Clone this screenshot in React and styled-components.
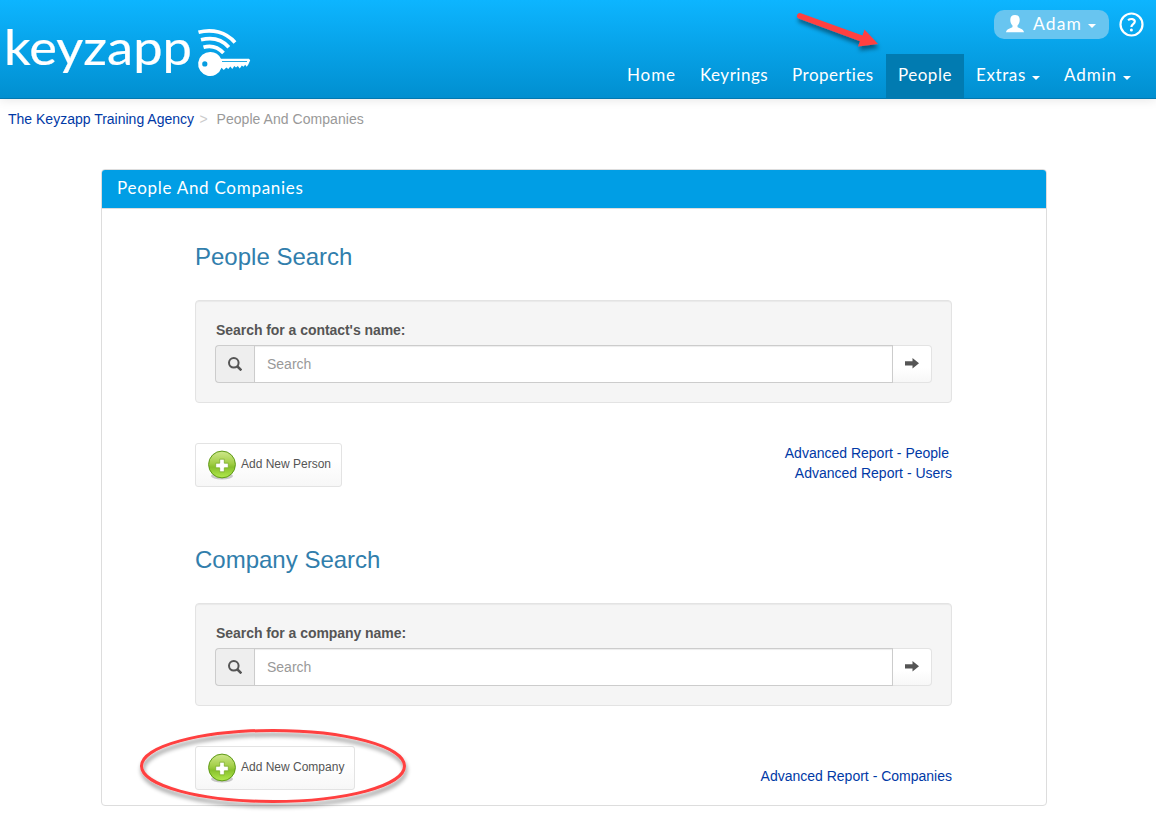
import React from "react";
import styled, { createGlobalStyle } from "styled-components";

const GlobalStyle = createGlobalStyle`
    * {
        box-sizing: border-box;
    }

    body {
        margin: 0;
        background-color: #fff;
        color: #555;
        font-family: "Liberation Sans", Arial, sans-serif;
        font-size: 14px;
        line-height: 20px;
    }

    a {
        color: #0039a6;
        text-decoration: none;
    }
`;

const Page = styled.div`
    position: relative;
    height: 833px;
    overflow: hidden;
`;

const Header = styled.header`
    height: 99px;
    display: flex;
    justify-content: space-between;
    border-bottom: 1px solid #0278b0;
    background: linear-gradient(#0db5ff, #018fd0);
    box-shadow: 0 1px 10px rgba(0, 0, 0, 0.1);
    color: #fff;
    font-family: Lato, sans-serif;
`;

const Logo = styled.svg`
    width: 256px;
    height: 98px;
    display: block;
`;

const HeaderRight = styled.div`
    display: flex;
    flex-direction: column;
    justify-content: space-between;
    padding: 10px 12px 0 0;
`;

const UserBar = styled.div`
    display: flex;
    justify-content: flex-end;
    align-items: center;
    gap: 10px;
`;

const UserButton = styled.button`
    width: 115px;
    height: 29px;
    display: flex;
    align-items: center;
    padding: 0 0 2px 12px;
    border: 0;
    border-radius: 10px;
    background-color: #68c5f0;
    color: #fff;
    font-family: Lato, sans-serif;
    font-size: 17.5px;
    letter-spacing: 1.1px;
`;

const UserName = styled.span`
    margin-left: 9px;
`;

const Nav = styled.nav`
    display: flex;
`;

const NavItem = styled.a`
    width: ${(props) => props.$width}px;
    height: 44px;
    display: flex;
    align-items: center;
    padding: 0 0 2px 12px;
    background-color: ${(props) => (props.$active ? "#017bb1" : "transparent")};
    color: #fff;
    font-size: 17px;
    letter-spacing: ${(props) => props.$spacing}px;
    white-space: nowrap;
`;

const Caret = styled.span`
    margin: 5px 0 0 6px;
    border-top: 4px solid #fff;
    border-left: 4px solid transparent;
    border-right: 4px solid transparent;
`;

const Breadcrumb = styled.div`
    height: 70px;
    display: flex;
    padding: 10px 8px;
    color: #999;
`;

const Divider = styled.span`
    width: 22.500px;
    padding-left: 5.500px;
    color: #ccc;
`;

const Current = styled.span`
    letter-spacing: 0.05px;
`;

const Panel = styled.section`
    width: 946px;
    height: 637px;
    margin-left: 101px;
    border: 1px solid #ddd;
    border-radius: 4px;
`;

const PanelHeading = styled.div`
    height: 39px;
    padding: 8px 15px;
    border-bottom: 1px solid #ddd;
    border-radius: 3px 3px 0 0;
    background-color: #009ee5;
    color: #fff;
    font-family: Lato, sans-serif;
    font-size: 17px;
    letter-spacing: 0.72px;
`;

const PanelBody = styled.div`
    padding: 35px 94px 0 93px;
`;

const Block = styled.div`
    height: 303px;
`;

const Title = styled.h2`
    height: 56px;
    margin: 0;
    color: #317eac;
    font-size: 24px;
    font-weight: 400;
    line-height: 26px;
`;

const Well = styled.div`
    height: 103px;
    padding: 19px;
    border: 1px solid #e3e3e3;
    border-radius: 4px;
    background-color: #f5f5f5;
    box-shadow: inset 0 1px 1px rgba(0, 0, 0, 0.05);
`;

const Label = styled.label`
    display: block;
    height: 25px;
    padding-left: 1px;
    font-weight: 700;
    letter-spacing: -0.05px;
`;

const InputGroup = styled.div`
    height: 38px;
    display: flex;
`;

const Addon = styled.span`
    width: 39px;
    display: flex;
    align-items: center;
    justify-content: center;
    border: 1px solid #ccc;
    border-right: 0;
    border-radius: 4px 0 0 4px;
    background-color: #eee;
`;

const Input = styled.input`
    flex: 1;
    min-width: 0;
    padding: 0 12px;
    border: 1px solid #ccc;
    background-color: #fff;
    box-shadow: inset 0 1px 1px rgba(0, 0, 0, 0.075);
    font-family: inherit;
    font-size: 14px;

    &::placeholder {
        color: #999;
        opacity: 1;
    }
`;

const GoButton = styled.button`
    width: 39px;
    display: flex;
    align-items: center;
    justify-content: center;
    padding: 0 1px 2px 0;
    border: 1px solid #e3e3e3;
    border-left: 0;
    border-radius: 0 4px 4px 0;
    background: linear-gradient(#fff 60%, #f7f7f7);
`;

const Actions = styled.div`
    height: 44px;
    display: flex;
    justify-content: space-between;
    align-items: flex-start;
    margin-top: 40px;
`;

const AddButton = styled.button`
    width: ${(props) => props.$width}px;
    height: 44px;
    display: flex;
    align-items: center;
    gap: 4px;
    padding: 0 0 0 10px;
    border: 1px solid #e3e3e3;
    border-radius: 3px;
    background: linear-gradient(#fff 40%, #f7f7f7);
    color: #555;
    font-family: inherit;
    font-size: 12px;
    white-space: nowrap;
`;

const AddLabel = styled.span`
    padding-bottom: 2px;
`;

const Reports = styled.div`
    padding-top: ${(props) => props.$top || 0}px;
    text-align: right;
`;

const Report = styled.a`
    display: block;
    padding-right: ${(props) => props.$inset || 0}px;
`;

const Annotations = styled.svg`
    position: absolute;
    left: 0;
    top: 0;
    width: 1156px;
    height: 833px;
    pointer-events: none;
`;

function BrandLogo() {
    return (
        <Logo viewBox="0 0 256 98" fill="none">
            <text
                x="4"
                y="64.500"
                fill="#fff"
                fontFamily="Lato"
                fontSize="49"
                stroke="#fff"
                strokeWidth="0.200"
                textLength="188"
                lengthAdjust="spacingAndGlyphs"
            >
                keyzapp
            </text>
            <g stroke="#fff" strokeWidth="3.700">
                <path d="M198.500 32.300C212 28.500 226 32 235 42.500" />
                <path d="M201 39.800C212 37 222 39.500 228.800 47.200" />
                <path d="M203.500 47.200C211 45 218 47 223.500 53" />
            </g>
            <path
                fill="#fff"
                fillRule="evenodd"
                d="M210.500 52a12 12 0 0 1 10.500 6.800H249l1.200 1.500-2 4.500-1.500 2-1.500-2-1.700 2-1.700-1.200-2 3-2-2.500-1.800 1.500-1.700-1.500-2 3-2-2.500-2 2.500-2-1.500-2.500 2.500-2.300-2.300A12 12 0 1 1 210.500 52zM204.800 61.300a2.600 2.600 0 1 0 0 5.200 2.600 2.600 0 0 0 0-5.200z"
            />
            <path stroke="#0aa0df" strokeWidth="0.900" d="M222 61.500h25" />
        </Logo>
    );
}

function PersonIcon() {
    return (
        <svg width="18" height="18" viewBox="0 0 18 18" fill="#fff">
            <path d="M9 0c3.400 0 4.800 2 4.700 5 0 2.500-1 4.200-2.200 5.500v1.500c1 1.200 6 1.700 6.500 5.300H0c.5-3.600 5.500-4.100 6.500-5.300v-1.500C5.300 9.200 4.300 7.500 4.300 5 4.200 2 5.600 0 9 0z" />
        </svg>
    );
}

function HelpIcon() {
    return (
        <svg width="25" height="25" viewBox="0 0 25 25" fill="none">
            <circle cx="12.500" cy="12.500" r="11" stroke="#fff" strokeWidth="2.200" />
            <path
                stroke="#fff"
                strokeWidth="2.200"
                d="M9 8.200C11.500 6.400 15.800 6.500 15.800 9.600c0 2.600-3.400 2.500-3.400 5.400"
            />
            <circle cx="12.400" cy="18" r="1.500" fill="#fff" />
        </svg>
    );
}

function SearchIcon() {
    return (
        <svg width="14" height="14" viewBox="0 0 14 14" fill="none" stroke="#555">
            <circle cx="5.800" cy="5.800" r="4.800" strokeWidth="2" />
            <path d="M9 9l4.400 4.400" strokeWidth="2.500" />
        </svg>
    );
}

function ArrowIcon() {
    return (
        <svg width="14" height="11" viewBox="0 0 14 11" fill="#555">
            <path d="M0 3.300h7.500V.1L14 5.300l-6.500 5.200V7.500H0z" />
        </svg>
    );
}

function PlusIcon() {
    return (
        <svg width="31" height="32" viewBox="0 0 31 32">
            <defs>
                <linearGradient id="plusFill" x2="0" y2="1">
                    <stop offset="0" stopColor="#cfe78c" />
                    <stop offset="0.450" stopColor="#a3cf48" />
                    <stop offset="0.600" stopColor="#88c02c" />
                    <stop offset="1" stopColor="#b2ea4e" />
                </linearGradient>
            </defs>
            <ellipse cx="16" cy="27" rx="11" ry="3.500" fill="#000" opacity="0.200" />
            <circle cx="16" cy="15.500" r="13.400" fill="url(#plusFill)" stroke="#5f9a18" />
            <path
                d="M13.700 10.200h4.600v4h4v4.600h-4v4h-4.600v-4h-4v-4.600h4z"
                fill="#fff"
                stroke="#76a823"
                strokeWidth="0.700"
            />
        </svg>
    );
}

function SearchBlock({ title, label, addLabel, addWidth, reportsTop, reports }) {
    return (
        <Block>
            <Title>{title}</Title>
            <Well>
                <Label>{label}</Label>
                <InputGroup>
                    <Addon>
                        <SearchIcon />
                    </Addon>
                    <Input placeholder="Search" />
                    <GoButton>
                        <ArrowIcon />
                    </GoButton>
                </InputGroup>
            </Well>
            <Actions>
                <AddButton $width={addWidth}>
                    <PlusIcon />
                    <AddLabel>{addLabel}</AddLabel>
                </AddButton>
                <Reports $top={reportsTop}>
                    {reports.map((report) => (
                        <Report key={report.name} href="#" $inset={report.inset}>
                            {report.name}
                        </Report>
                    ))}
                </Reports>
            </Actions>
        </Block>
    );
}

const navItems = [
    { name: "Home", width: 73, spacing: 0.9 },
    { name: "Keyrings", width: 92, spacing: 0.5 },
    { name: "Properties", width: 106, spacing: 0.5 },
    { name: "People", width: 78, spacing: 0.5, active: true },
    { name: "Extras", width: 88, spacing: 0.6, menu: true },
    { name: "Admin", width: 92, spacing: 0.9, menu: true },
];

export default function App() {
    return (
        <Page>
            <GlobalStyle />
            <Header>
                <BrandLogo />
                <HeaderRight>
                    <UserBar>
                        <UserButton>
                            <PersonIcon />
                            <UserName>Adam</UserName>
                            <Caret />
                        </UserButton>
                        <HelpIcon />
                    </UserBar>
                    <Nav>
                        {navItems.map((item) => (
                            <NavItem
                                key={item.name}
                                href="#"
                                $width={item.width}
                                $spacing={item.spacing}
                                $active={item.active}
                            >
                                {item.name}
                                {item.menu && <Caret />}
                            </NavItem>
                        ))}
                    </Nav>
                </HeaderRight>
            </Header>

            <Breadcrumb>
                <a href="#">The Keyzapp Training Agency</a>
                <Divider>&gt;</Divider>
                <Current>People And Companies</Current>
            </Breadcrumb>

            <Panel>
                <PanelHeading>People And Companies</PanelHeading>
                <PanelBody>
                    <SearchBlock
                        title="People Search"
                        label="Search for a contact's name:"
                        addLabel="Add New Person"
                        addWidth={147}
                        reports={[
                            { name: "Advanced Report - People", inset: 3 },
                            { name: "Advanced Report - Users" },
                        ]}
                    />
                    <SearchBlock
                        title="Company Search"
                        label="Search for a company name:"
                        addLabel="Add New Company"
                        addWidth={160}
                        reportsTop={20}
                        reports={[{ name: "Advanced Report - Companies" }]}
                    />
                </PanelBody>
            </Panel>

            <Annotations viewBox="0 0 1156 833">
                <defs>
                    <filter id="drop" x="-10%" y="-30%" width="120%" height="170%">
                        <feDropShadow dx="1" dy="4" stdDeviation="2" floodOpacity="0.450" />
                    </filter>
                </defs>
                <g filter="url(#drop)">
                    <path
                        fill="#ff4040"
                        d="M800.800 13.200L862.500 35.500 864.500 29.500 878 44 858 46.500 860 41.200 798.500 18.500A2.900 2.900 0 0 1 800.800 13.200z"
                    />
                </g>
                <ellipse
                    cx="273"
                    cy="766"
                    rx="131.500"
                    ry="35.500"
                    fill="none"
                    stroke="#ff4040"
                    strokeWidth="3"
                    filter="url(#drop)"
                />
            </Annotations>
        </Page>
    );
}
